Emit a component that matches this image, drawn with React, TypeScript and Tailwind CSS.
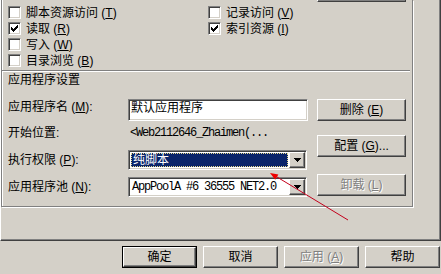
import type { ReactNode } from "react";

const ui = "font-['Liberation_Sans','Noto_Sans_CJK_SC',sans-serif]";
const mono = "font-['Liberation_Mono','Noto_Sans_CJK_SC',monospace] text-[12px] tracking-[-1.2px]";

const raised =
  "border border-t-white border-l-white border-r-[#404040] border-b-[#404040] shadow-[inset_-1px_-1px_0_#808080] bg-[#d4d0c8]";
const sunken =
  "border border-t-[#808080] border-l-[#808080] border-r-white border-b-white shadow-[inset_1px_1px_0_#404040,inset_-1px_-1px_0_#d4d0c8]";
const grayed = "text-[#808080] [text-shadow:1px_1px_0_#fff]";

function Check({ checked = false }: { checked?: boolean }) {
  return (
    <span
      className={`flex h-[13px] w-[13px] shrink-0 items-center justify-center bg-white ${sunken}`}
    >
      {checked && (
        <svg width="7" height="7" viewBox="0 0 7 7" shapeRendering="crispEdges">
          <path
            d="M0 2h1v3H0z M1 3h1v3H1z M2 4h1v3H2z M3 3h1v3H3z M4 2h1v3H4z M5 1h1v3H5z M6 0h1v3H6z"
            fill="#000"
          />
        </svg>
      )}
    </span>
  );
}

function CheckRow({ label, k, checked }: { label: string; k: string; checked?: boolean }) {
  return (
    <div className="flex h-[13px] items-center gap-[5px] whitespace-nowrap">
      <Check checked={checked} />
      <span>
        {label} (<u>{k}</u>)
      </span>
    </div>
  );
}

function Btn({
  children,
  disabled,
  className = "",
}: {
  children: ReactNode;
  disabled?: boolean;
  className?: string;
}) {
  return (
    <div
      className={`flex items-center justify-center whitespace-nowrap ${raised} ${disabled ? grayed : ""} ${className}`}
    >
      {children}
    </div>
  );
}

function DropArrow() {
  return (
    <div className={`flex h-full w-[16px] shrink-0 items-center justify-center ${raised}`}>
      <svg width="7" height="4" viewBox="0 0 7 4" shapeRendering="crispEdges">
        <path d="M0 0h7v1H0z M1 1h5v1H1z M2 2h3v1H2z M3 3h1v1H3z" fill="#000" />
      </svg>
    </div>
  );
}

function Combo({ children, selected }: { children: ReactNode; selected?: boolean }) {
  return (
    <div className={`flex h-[20px] w-[179px] bg-white p-[1px] ${sunken}`}>
      <div className="flex min-w-0 flex-1 p-[1px]">
        {selected ? (
          <div className="flex flex-1 items-center border border-dotted border-[#e6d98c] bg-[#0a246a] pl-[1px] text-white">
            {children}
          </div>
        ) : (
          <div className="flex flex-1 items-center overflow-hidden whitespace-nowrap pl-[1px]">
            {children}
          </div>
        )}
      </div>
      <DropArrow />
    </div>
  );
}

function Label({ text, k }: { text: string; k: string }) {
  return (
    <div className="w-[120px] shrink-0 whitespace-nowrap">
      {text} (<u>{k}</u>):
    </div>
  );
}

export default function App() {
  return (
    <div
      className={`relative h-[274px] w-[441px] overflow-hidden bg-[#d4d0c8] text-[12px] leading-[14px] text-black ${ui}`}
    >
      {/* property page */}
      <div className="h-[241px] border-r border-b border-l border-r-[#404040] border-b-[#404040] border-l-white shadow-[inset_-1px_-1px_0_#808080]">
        <div className="h-[207px] w-[412px] border-r border-b border-l border-[#808080] shadow-[inset_1px_0_0_#fff,1px_1px_0_#fff]">
          {/* bottom edge of the button above */}
          <div className={`ml-[315px] h-[2px] w-[89px] border-t-0 ${raised}`} />

          <div className="mt-[4px] ml-[6px] flex items-start">
            <div className="flex w-[200px] flex-col gap-[3px]">
              <CheckRow label="脚本资源访问" k="T" />
              <CheckRow label="读取" k="R" checked />
              <CheckRow label="写入" k="W" />
              <CheckRow label="目录浏览" k="B" />
            </div>
            <div className="flex flex-col gap-[3px]">
              <CheckRow label="记录访问" k="V" />
              <CheckRow label="索引资源" k="I" checked />
            </div>
          </div>

          <div className="mt-[3px] h-[2px] w-[408px] border-t border-b border-t-[#808080] border-b-white" />

          <div className="flex">
            <div className="ml-[6px] w-[300px]">
              <div className="mt-[1px] h-[14px]">应用程序设置</div>

              <div className="mt-[12px] flex h-[22px] items-start">
                <div className="mt-[1px]">
                  <Label text="应用程序名" k="M" />
                </div>
                <div className={`h-[22px] w-[180px] bg-white pt-[1px] pl-[2px] ${sunken}`}>
                  默认应用程序
                </div>
              </div>

              <div className="mt-[1px] flex h-[22px] items-center">
                <div className="w-[120px] shrink-0">开始位置:</div>
                <div className={`pl-[2px] whitespace-nowrap ${mono}`}>
                  &lt;Web2112646_Zhaimen(...
                </div>
              </div>

              <div className="mt-[6px] flex h-[20px] items-center">
                <Label text="执行权限" k="P" />
                <Combo selected>纯脚本</Combo>
              </div>

              <div className="mt-[7px] flex h-[20px] items-center">
                <Label text="应用程序池" k="N" />
                <Combo>
                  <span className={mono}>AppPoolA #6 36555 NET2.0</span>
                </Combo>
              </div>
            </div>

            <div className="ml-[9px] flex flex-col">
              <Btn className="mt-[27px] h-[22px] w-[89px]">
                删除 (<u>E</u>)
              </Btn>
              <Btn className="mt-[14px] h-[22px] w-[89px]">
                配置 (<u>G</u>)...
              </Btn>
              <Btn disabled className="mt-[17px] h-[22px] w-[89px]">
                卸载 (<u>L</u>)
              </Btn>
            </div>
          </div>
        </div>
      </div>

      {/* dialog buttons */}
      <div className="flex gap-[6px] pt-[5px] pl-[122px]">
        <div className="h-[22px] w-[75px] border border-black">
          <Btn className="h-full w-full">确定</Btn>
        </div>
        <Btn className="h-[22px] w-[75px]">取消</Btn>
        <Btn disabled className="h-[22px] w-[75px]">
          应用 (<u>A</u>)
        </Btn>
        <Btn className="h-[22px] w-[75px]">帮助</Btn>
      </div>

      {/* red annotation arrow */}
      <svg
        className="pointer-events-none absolute top-0 left-0"
        width="441"
        height="274"
        viewBox="0 0 441 274"
      >
        <line x1="277" y1="177" x2="348" y2="220" stroke="#c4001c" strokeWidth="1" />
        <polygon points="270,173 275.2,179.8 278.4,174.6" fill="#ee0000" />
      </svg>
    </div>
  );
}
